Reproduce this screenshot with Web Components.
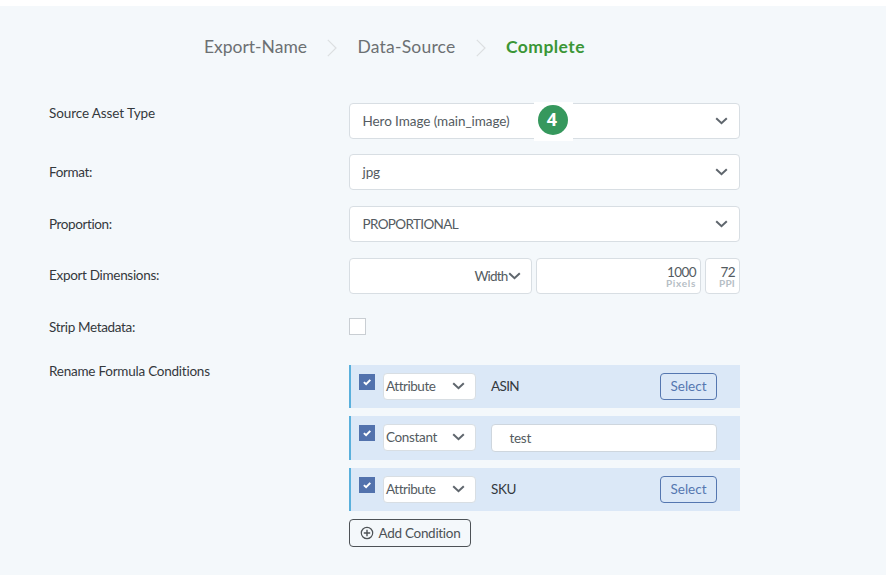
<!DOCTYPE html>
<html lang="en">
<head>
<meta charset="utf-8">
<title>Export</title>
<style>
html,body{margin:0;background:#fff}
body{font-family:Lato,"Liberation Sans",sans-serif;font-size:13.5px;color:#34393d;padding-top:6px;height:579px;overflow:hidden}
</style>
</head>
<body>
<export-page></export-page>
<script>
const define = (name, html, init) => {
  const t = document.createElement('template');
  t.innerHTML = html;
  customElements.define(name, class extends HTMLElement {
    connectedCallback() {
      if (this.shadowRoot) return;
      this.attachShadow({mode: 'open'}).append(t.content.cloneNode(true));
      if (init) init.call(this, this.shadowRoot);
    }
  });
};

// A single line of text tracked out or in to a given width.
define('fit-text', `<style>:host{display:inline-block;white-space:nowrap;line-height:18px}span{display:inline-block}</style><span><slot></slot></span>`, function (root) {
  const w = +this.getAttribute('w'), s = root.querySelector('span');
  const n = this.textContent.length, natural = s.getBoundingClientRect().width;
  const ls = (w - natural) / n;
  s.style.letterSpacing = ls.toFixed(3) + 'px';
});

define('chevron-down', `<style>:host{display:block;width:13px;height:8px}svg{display:block}</style>
<svg width="13" height="8" viewBox="0 0 13 8"><path d="M1.2 1.2 6.5 6.2 11.8 1.2" fill="none" stroke="#5f666d" stroke-width="2"/></svg>`);

define('step-arrow', `<style>:host{display:block;width:10px;height:18px}svg{display:block}</style>
<svg width="10" height="18" viewBox="0 0 10 18"><path d="M.8 .8 9 9 .8 17.2" fill="none" stroke="#dcdfe1" stroke-width="1.2"/></svg>`);

define('step-bar', `<style>:host{display:flex;align-items:center;height:24px;padding-left:204px;font-size:17.5px;color:#6c7073}
step-arrow{margin:1px 20px 0 20.5px}.on{color:#3b9636;font-weight:700}</style>
<fit-text w="103">Export-Name</fit-text><step-arrow></step-arrow><fit-text w="98">Data-Source</fit-text><step-arrow></step-arrow><fit-text class="on" w="79">Complete</fit-text>`);

define('select-box', `<style>:host{display:flex;box-sizing:border-box;align-items:center;justify-content:space-between;height:36px;padding:0 11.5px 0 12.5px;background:#fff;border:1px solid #d8dee3;border-radius:4px;color:#545b61}</style>
<slot></slot><chevron-down></chevron-down>`);

define('unit-box', `<style>:host{display:flex;box-sizing:border-box;flex-direction:column;align-items:flex-end;height:36px;padding:7px 4px 0;background:#fff;border:1px solid #d8dee3;border-radius:4px;color:#545b61}
.u{font-size:10px;font-weight:700;color:#b6bec5}::slotted(*){display:block;line-height:12px}::slotted([slot=unit]){line-height:11px}slot{display:block}</style>
<slot></slot><slot name="unit" class="u"></slot>`);

define('check-box', `<style>:host{display:block;box-sizing:border-box;width:17px;height:17px;background:#fff;border:1px solid #c9ced3}
:host([checked]){width:16px;height:16px;background:#5272ad;border-color:#5272ad}svg{display:none}:host([checked]) svg{display:block}</style>
<svg width="14" height="14" viewBox="0 0 14 14"><path d="M3.9 7.1 6.1 9.2 10.3 4.9" fill="none" stroke="#fff" stroke-width="2"/></svg>`);

define('form-row', `<style>:host{display:grid;grid-template-columns:300px 391px;padding-left:49px;align-items:start}.l{color:#34393d;display:block}</style>
<slot name="label" class="l"></slot><slot></slot>`);

define('outline-button', `<style>:host{display:flex;box-sizing:border-box;align-items:center;justify-content:center;gap:5px;border:1px solid currentColor;border-radius:4px}</style><slot></slot>`);

define('condition-row', `<style>:host{display:grid;box-sizing:border-box;grid-template-columns:16px 93px 226px;column-gap:8px;height:43px;padding:8px 0 0 8px;background:#dbe8f7;border-left:2px solid #5ab0dc;align-items:start}
check-box{margin-top:1px}select-box{height:27px;padding:0 10px 1px 2px}
.b{display:flex;align-items:center;justify-content:space-between;height:27px;margin-left:7px;width:226px}</style>
<check-box checked></check-box><select-box><slot name="kind"></slot></select-box><div class="b"><slot></slot></div>`);

define('text-field', `<style>:host{display:flex;box-sizing:border-box;flex:1;align-items:center;height:28px;padding-left:17.5px;background:#fff;border:1px solid #ced6de;border-radius:4px;color:#545b61}</style><slot></slot>`);

define('num-badge', `<style>:host{position:absolute;left:185px;top:-1px;width:39px;height:39px;background:#fff}
b{display:block;box-sizing:border-box;width:30px;height:30px;margin:2.5px 0 0 4px;border-radius:50%;background:#36985d;color:#fff;font:700 18px/29px "Open Sans",sans-serif;text-align:center;padding-right:2px}</style><b><slot></slot></b>`);

define('export-page', `<style>
:host{display:block;box-sizing:border-box;height:569px;background:#f4f8fb;padding-top:29px}
.form{display:grid;grid-template-rows:51px 52px 52px 60px 47px auto;margin-top:44px}
.rel{position:relative}
.mid{padding-top:9px}
.dims{display:grid;grid-template-columns:183px 165px 35px;gap:4px}
.dims select-box{justify-content:flex-end;padding-right:10.5px}
.conds{display:grid;grid-template-rows:43px 44px 43px;row-gap:8px}
.conds condition-row{height:auto}
.v{color:#34393d;margin-top:-1px}
.sel{width:57px;height:27px;padding-bottom:1px;color:#5577b0}
.add{width:122px;height:28px;margin-top:8px;padding-bottom:1px;color:#4d5256}
.add svg{display:block}
</style>
<step-bar></step-bar>
<div class="form">
<form-row><fit-text slot="label" style="padding-top:1px" w="106">Source Asset Type</fit-text><div class="rel"><select-box><fit-text w="147">Hero Image (main_image)</fit-text></select-box><num-badge>4</num-badge></div></form-row>
<form-row><fit-text slot="label" class="mid" w="43">Format:</fit-text><select-box><fit-text w="17.5">jpg</fit-text></select-box></form-row>
<form-row><fit-text slot="label" class="mid" w="63">Proportion:</fit-text><select-box><fit-text w="95.5">PROPORTIONAL</fit-text></select-box></form-row>
<form-row><fit-text slot="label" style="padding-top:8px" w="110">Export Dimensions:</fit-text><div class="dims"><select-box><fit-text w="33">Width</fit-text></select-box><unit-box><fit-text w="29">1000</fit-text><fit-text slot="unit" w="30">Pixels</fit-text></unit-box><unit-box><fit-text w="14.5">72</fit-text><fit-text slot="unit" w="16">PPI</fit-text></unit-box></div></form-row>
<form-row><fit-text slot="label" w="86">Strip Metadata:</fit-text><check-box></check-box></form-row>
<form-row><fit-text slot="label" style="display:block;margin-top:-3px" w="161">Rename Formula Conditions</fit-text><div><div class="conds">
<condition-row><fit-text slot="kind" w="49">Attribute</fit-text><fit-text class="v" w="28">ASIN</fit-text><outline-button class="sel"><fit-text w="36">Select</fit-text></outline-button></condition-row>
<condition-row><fit-text slot="kind" w="51">Constant</fit-text><text-field><fit-text w="21.5">test</fit-text></text-field></condition-row>
<condition-row><fit-text slot="kind" w="49">Attribute</fit-text><fit-text class="v" w="25">SKU</fit-text><outline-button class="sel"><fit-text w="36">Select</fit-text></outline-button></condition-row>
</div><outline-button class="add"><svg width="14" height="14" viewBox="0 0 14 14"><path d="M7 3.8v6.4M3.8 7h6.4" stroke="currentColor" stroke-width="1.4"/><circle cx="7" cy="7" r="5.7" fill="none" stroke="currentColor" stroke-width="1.2"/></svg><fit-text w="82">Add Condition</fit-text></outline-button></div></form-row>
</div>`);
</script>
</body>
</html>
